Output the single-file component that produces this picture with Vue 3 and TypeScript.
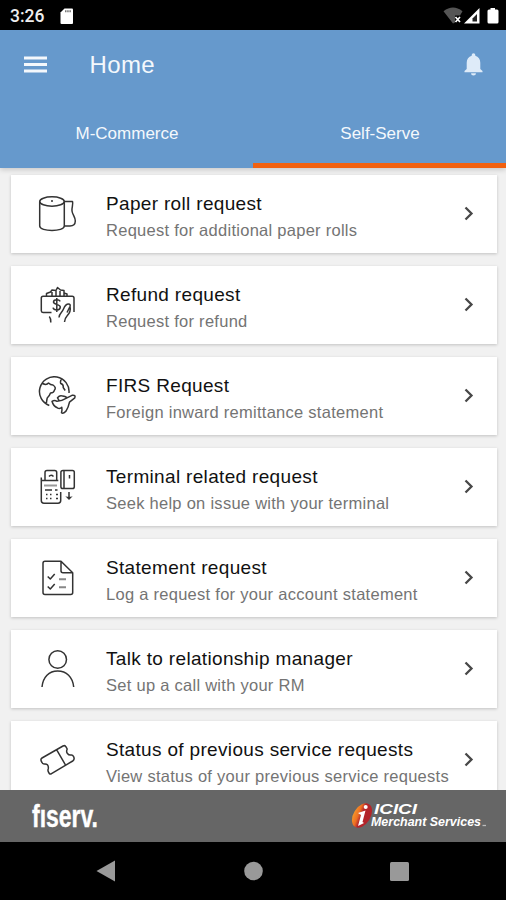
<script setup lang="ts">
import { ref } from 'vue'

type IconName = 'roll' | 'refund' | 'globe' | 'terminal' | 'document' | 'person' | 'ticket'

interface ServiceItem {
  icon: IconName
  title: string
  detail: string
}

const tabs: string[] = ['M-Commerce', 'Self-Serve']
const activeTab = ref<number>(1)

const services: ServiceItem[] = [
  { icon: 'roll', title: 'Paper roll request', detail: 'Request for additional paper rolls' },
  { icon: 'refund', title: 'Refund request', detail: 'Request for refund' },
  { icon: 'globe', title: 'FIRS Request', detail: 'Foreign inward remittance statement' },
  { icon: 'terminal', title: 'Terminal related request', detail: 'Seek help on issue with your terminal' },
  { icon: 'document', title: 'Statement request', detail: 'Log a request for your account statement' },
  { icon: 'person', title: 'Talk to relationship manager', detail: 'Set up a call with your RM' },
  { icon: 'ticket', title: 'Status of previous service requests', detail: 'View status of your previous service requests' },
]
</script>

<template>
  <div class="screen">
    <div class="status">
      <span class="clock">3:26</span>
      <svg class="sd" width="14" height="17" viewBox="0 0 14 17">
        <path d="M4.5 .5H12q1 0 1 1V15q0 1-1 1H1.500q-1 0-1-1V4.500z" fill="#fff" />
        <path d="M5 3.300h6.500" stroke="#777" stroke-width="2" stroke-dasharray="1.500 .7" />
      </svg>
      <svg class="signals" width="58" height="18" viewBox="0 0 58 18">
        <path d="M.5 4.300Q10-3.200 19.500 4.300L17 8.500h-5v7l-2 1z" fill="#555" />
        <path d="M12.500 10l4.500 5m0-5l-4.500 5" stroke="#fff" stroke-width="1.700" />
        <path d="M21 16.500L36.500 1v15.500z" fill="#fff" />
        <path d="M29.500 11.500L34 7v7.500h-4.500z" fill="#222" />
        <path d="M47.500 1h4.500v1.500h2q1.500 0 1.500 1.500v11q0 1.500-1.500 1.500h-8q-1.500 0-1.500-1.500V4q0-1.500 1.500-1.500h1.500z" fill="#fff" />
      </svg>
    </div>

    <header class="appbar">
      <div class="toolbar">
        <svg class="menu" width="23" height="17" viewBox="0 0 23 17">
          <path d="M0 2h23M0 8.500h23M0 15h23" stroke="#f4f8fc" stroke-width="2.800" />
        </svg>
        <h1>Home</h1>
        <svg class="bell" width="19" height="23" viewBox="0 0 19 23">
          <path d="M9.500 22.500q2.500 0 2.500-2.300H7q0 2.300 2.500 2.300zM16.300 16V9.800c0-3.500-1.900-6.200-5-7V2a1.800 1.800 0 0 0-3.600 0v.8c-3.100.8-5 3.500-5 7V16L.5 18v1.200h18V18z" fill="#deebf8" />
        </svg>
      </div>
      <nav class="tabs">
        <button
          v-for="(tab, i) in tabs"
          :key="tab"
          class="tab"
          :class="{ active: activeTab === i }"
          @click="activeTab = i"
        >
          {{ tab }}
        </button>
      </nav>
    </header>

    <main class="list">
      <article v-for="item in services" :key="item.icon" class="card">
        <svg class="icon" width="40" height="40" viewBox="0 0 40 40">
          <g v-if="item.icon === 'roll'">
            <ellipse cx="15" cy="7.500" rx="12.300" ry="4.700" />
            <path d="M2.700 7.500V32c0 6 24.600 6 24.600 0V7.500M27.300 7.500h8.200c1 3-1 6-.5 9.500.5 4 3.500 6 3.300 10-.1 3.500-1.800 5-5.300 5h-5.700" />
            <path d="M14 7h2" />
          </g>
          <g v-else-if="item.icon === 'refund'">
            <path d="M14.500 27.500H6q-1.700 0-1.700-1.700V13q0-1.800 1.800-1.800h29q1.900 0 1.900 1.800v14M9.500 11V8.500l4-1.500 1.500-2 4 .5 1.500-3 3 2.500 3.500.5v2.500l3 1v2M15 11V7m4 4V6m4 5V6m4 5V8" />
            <path d="M23.300 16.300q-1-1.500-3.500-1.500-3.300 0-3.300 2.300c0 2.800 6.800 1.800 6.800 5 0 2.300-1.700 2.900-3.300 2.900-2.500 0-3.700-1-4-2.300M19.800 13v14M22 32.500c.5-5 3-4.500 4.500-8.500q2-5 5-5c1.500 0 2 1 1.500 2.500l-3 6M33 21.500c1 4-.5 7-3 9.500q-2 2-2.500 6M12.300 31.500q1.700 2 1.500 6" />
          </g>
          <g v-else-if="item.icon === 'globe'">
            <path d="M32 17A14.800 14.800 0 1 0 12.300 29.500M5.500 7.500q4 2 6-.5 2 2 4.500 2 3.500 2.500 1.500 5-.5 3-4 3-1 3-3.300 5-.5 2.500-.8 5M24.500 3q-1.500 2-.8 4.500 3 .8 2.500 4l2 3" />
            <path d="M15 25.300q2.500-1.500 5 0 5-.5 9-3l6-3q4-.5 2.800 2.500l-5.300 4.300q-1 5-3.500 9-3 3-4.500 1.700.8-3 .3-5.500-2 2-4.500.5-4-1.500-5.300-6.500zM22 24.300l-1.500-2.500q2-2.500 4-2 4 .5 6 2" />
          </g>
          <g v-else-if="item.icon === 'terminal'">
            <path d="M4.300 10.500v23q0 2.700 2.700 2.700h14q2.700 0 2.700-2.700V25M8 13.500V5.500q0-2 2-2h7.700q2 0 2 2v8M4.300 13.500h17M12 9.500q2-2.500 4.500 0M26 3.500h9.500q1.800 0 1.800 1.800v14.500q0 1.800-1.800 1.800H25.700q-1.800 0-1.800-1.800V5.300q0-1.800 2.100-1.800zm1 0v18M32.500 8v3.500" />
            <path d="M7 18.500h13" stroke="#999" stroke-width="2" />
            <path d="M8 23h7M18 23h2.500M9 27.500h1.500M13 27.500h1.500M19 27.500h2M9 31.500h1.500M13 31.500h1.500M19 31.500h2M32 25v6" />
            <path d="M28.300 29.200q3.700 1 7.400 0L32 33z" fill="#333" stroke="none" />
          </g>
          <g v-else-if="item.icon === 'document'">
            <path d="M8 3.200h16l11.700 11.600v19.700q0 2-2 2H8q-2 0-2-2V5.200q0-2 2-2zM24 3.200v9.600q0 2 2 2h9.700M10.700 18.500l2.600 2.500 4.400-5M10.700 28.500l2.600 2.500 4.400-5" />
            <path d="M22 21.200h7M22 29.300h7" stroke="#888" stroke-width="2" />
          </g>
          <g v-else-if="item.icon === 'person'">
            <circle cx="20.700" cy="10.500" r="8.800" />
            <path d="M5 38c1-10 7-16 15.700-16S35.700 28 36.700 38" />
          </g>
          <g v-else>
            <path d="M5 18L26 6q2-1 3 .8l1.200 2.200c-1.700 3.500 1 6.500 4 6 1.300-.2 1.800.5 2.400 1.700q1.400 2.800-.9 4.300L14.500 33.700q-1.500 1-2.500-.7c-1-1.500-1.500-2.500-.8-4 .8-4-1.500-5.500-4.200-5q-1.500 0-2.300-2-1.700-2.800.3-4zM19.700 9.800l9 15.500" />
          </g>
        </svg>
        <div class="copy">
          <h2>{{ item.title }}</h2>
          <p>{{ item.detail }}</p>
        </div>
        <svg class="chevron" width="10" height="15" viewBox="0 0 10 15">
          <path d="M1.500 1.500l6 6-6 6" fill="none" stroke="#484848" stroke-width="2.300" />
        </svg>
      </article>
    </main>

    <footer class="brands">
      <svg width="76" height="40" viewBox="0 0 76 40">
        <text class="fiserv" x="1" y="30.500" textLength="66" lengthAdjust="spacingAndGlyphs">fıserv.</text>
      </svg>
      <svg width="140" height="32" viewBox="0 0 140 32">
        <defs>
          <linearGradient id="seal" x1="0" y1=".7" x2="1" y2=".4">
            <stop offset="0" stop-color="#f79a28" />
            <stop offset=".3" stop-color="#ee7024" />
            <stop offset=".5" stop-color="#b3242a" />
          </linearGradient>
        </defs>
        <ellipse cx="11" cy="15.500" rx="8.500" ry="13.300" transform="rotate(32 11 15.500)" fill="url(#seal)" />
        <circle cx="14.700" cy="7" r="2" fill="#fff" />
        <path d="M7 13l7.500-2.500-3 11.500 1.500 1-6 3 3-11z" fill="#fff" />
        <text class="icici" x="23" y="14" textLength="43" lengthAdjust="spacingAndGlyphs">ICICI</text>
        <text class="merchant" x="20" y="26" textLength="110" lengthAdjust="spacingAndGlyphs">Merchant Services</text>
        <path d="M131.500 25.500h3.500" stroke="#bbb" stroke-width="1.300" />
      </svg>
    </footer>

    <div class="navbar">
      <svg width="506" height="58" viewBox="0 0 506 58" fill="#999">
        <path d="M96.500 29L115 18.500v21z" />
        <circle cx="253.500" cy="29" r="9.300" />
        <rect x="390" y="20" width="19" height="19" rx="1.500" />
      </svg>
    </div>
  </div>
</template>

<style>
body {
  margin: 0;
  overflow: hidden;
}
</style>

<style scoped>
.screen {
  display: flex;
  flex-direction: column;
  width: 506px;
  height: 900px;
  overflow: hidden;
  background: #f1f1f1;
  font-family: "Liberation Sans", Arial, sans-serif;
}
svg {
  display: block;
  flex: none;
}
.status {
  display: flex;
  align-items: center;
  flex: 0 0 30px;
  box-sizing: border-box;
  padding: 2px 5px 0 10px;
  background: #000;
}
.clock {
  width: 50px;
  color: #eee;
  font: 500 17.5px Roboto, sans-serif;
}
.signals {
  margin-left: auto;
}
.appbar {
  display: flex;
  flex-direction: column;
  flex: 0 0 137.500px;
  background: #6699cc;
  color: #f4f8fc;
  box-shadow: 0 2px 5px rgba(0, 0, 0, 0.16);
}
.toolbar {
  display: flex;
  align-items: center;
  height: 69px;
  padding: 0 23px 0 24px;
}
.toolbar h1 {
  margin: 0 auto 0 42.5px;
  font-size: 24px;
  font-weight: 400;
  letter-spacing: 0.4px;
}
.tabs {
  display: flex;
  flex: 1;
}
.tab {
  flex: 1;
  padding: 7px 0 0 1px;
  border: 0;
  border-bottom: 5px solid transparent;
  background: none;
  color: inherit;
  font: 400 17px "Liberation Sans", Arial, sans-serif;
}
.tab.active {
  border-bottom-color: #f16110;
}
.list {
  display: flex;
  flex: 1;
  flex-direction: column;
  gap: 13px;
  min-height: 0;
  padding: 7px 9px 0 11px;
  overflow: hidden;
}
.card {
  display: flex;
  align-items: center;
  flex: 0 0 78px;
  box-sizing: border-box;
  padding: 0 23px 0 26px;
  background: #fff;
  box-shadow: 0 1px 3px rgba(0, 0, 0, 0.2);
}
.icon {
  fill: none;
  stroke: #333;
  stroke-width: 1.5;
  stroke-linejoin: round;
}
.copy {
  margin: 0 auto 0 29px;
  padding-top: 6px;
  white-space: nowrap;
}
.copy h2 {
  margin: 0;
  color: #111;
  font-size: 19px;
  font-weight: 400;
  line-height: 26px;
  letter-spacing: 0.33px;
}
.copy p {
  margin: 0;
  color: #747474;
  font-size: 16.5px;
  line-height: 26px;
  letter-spacing: 0.27px;
}
.brands {
  display: flex;
  align-items: center;
  justify-content: space-between;
  flex: 0 0 52px;
  box-sizing: border-box;
  padding: 0 15px 0 31px;
  background: #666;
}
.brands text {
  fill: #fff;
  font-weight: 700;
}
.fiserv {
  font-size: 31px;
  stroke: #fff;
  stroke-width: 0.4;
}
.icici {
  font-size: 15px;
  font-style: italic;
}
.merchant {
  font-size: 12px;
  font-style: italic;
}
.navbar {
  flex: 0 0 58px;
  background: #000;
}
</style>
